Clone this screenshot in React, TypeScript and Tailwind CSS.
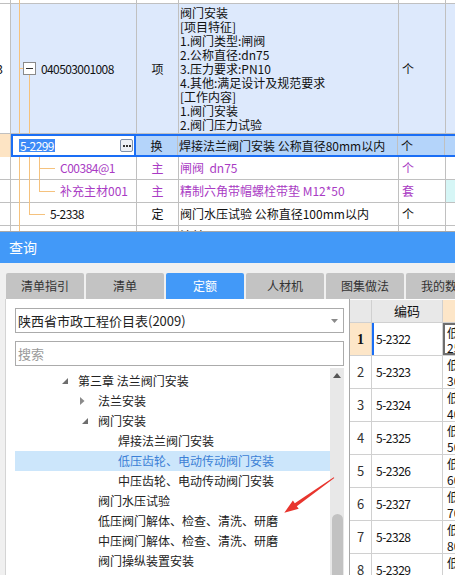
import React from 'react';

// top grid: items of the bill
const nameLines = [
  '阀门安装',
  '[项目特征]',
  '1.阀门类型:闸阀',
  '2.公称直径:dn75',
  '3.压力要求:PN10',
  '4.其他:满足设计及规范要求',
  '[工作内容]',
  '1.阀门安装',
  '2.阀门压力试验',
];

const tabs = ['清单指引', '清单', '定额', '人材机', '图集做法', '我的数据'];

interface TreeItem {
  text: string;
  level: 0 | 1 | 2;
  icon?: 'open' | 'closed';
  selected?: boolean;
}

const treeItems: TreeItem[] = [
  { text: '第三章 法兰阀门安装', level: 0, icon: 'open' },
  { text: '法兰安装', level: 1, icon: 'closed' },
  { text: '阀门安装', level: 1, icon: 'open' },
  { text: '焊接法兰阀门安装', level: 2 },
  { text: '低压齿轮、电动传动阀门安装', level: 2, selected: true },
  { text: '中压齿轮、电动传动阀门安装', level: 2 },
  { text: '阀门水压试验', level: 1 },
  { text: '低压阀门解体、检查、清洗、研磨', level: 1 },
  { text: '中压阀门解体、检查、清洗、研磨', level: 1 },
  { text: '阀门操纵装置安装', level: 1 },
];

const levelPad = ['pl-[47px]', 'pl-[67px]', 'pl-[87px]'];

const quotaRows = [
  ['1', '5-2322', '25'],
  ['2', '5-2323', '30'],
  ['3', '5-2324', '40'],
  ['4', '5-2325', '50'],
  ['5', '5-2326', '60'],
  ['6', '5-2327', '70'],
  ['7', '5-2328', '80'],
  ['8', '5-2329', '90'],
];

const TreeIcon: React.FC<{ icon?: 'open' | 'closed' }> = ({ icon }) => {
  if (icon === 'open') {
    return (
      <svg width="6" height="6" viewBox="0 0 6 6" className="mt-[-1px]">
        <path d="M6 0 L6 6 L0 6 Z" fill="#6e6e6e" />
      </svg>
    );
  }
  if (icon === 'closed') {
    return (
      <svg width="5" height="8" viewBox="0 0 5 8" className="ml-[-2px]">
        <path d="M0 0 L4.5 4 L0 8 Z" fill="#8a8a8a" />
      </svg>
    );
  }
  return null;
};

export default function App() {
  return (
    <div className="relative w-[455px] h-[575px] overflow-hidden bg-white font-['Noto_Sans_CJK_SC',sans-serif]">
      {/* Bill grid */}
      <div className="h-[232px] overflow-hidden text-[12px] leading-[14px] text-[#111]">
        {/* partial row above */}
        <div className="flex h-[4px] border-b border-[#c0c0c0]">
          <div className="w-[11px] border-r border-[#c0c0c0]" />
          <div className="relative w-[126px] border-r border-[#c0c0c0]">
            <span className="absolute left-[8px] top-0 bottom-0 w-px bg-[#f5c27e]" />
          </div>
          <div className="w-[42px] border-r border-[#c0c0c0]" />
          <div className="w-[220px] border-r border-[#c0c0c0]" />
          <div className="w-[47px] border-r border-[#c0c0c0]" />
          <div className="flex-1" />
        </div>

        {/* list item row */}
        <div className="flex h-[130px] border-b border-[#c0c0c0]">
          <div className="w-[11px] border-r border-[#c0c0c0] overflow-hidden flex items-center justify-end pr-[7px]">
            <span>3</span>
          </div>
          <div className="relative w-[126px] border-r border-[#c0c0c0] bg-[#dde9fc] flex items-center">
            <span className="absolute left-[8px] top-[-1px] bottom-[-1px] w-px bg-[#f5c27e]" />
            <span className="absolute left-[8px] top-[64px] w-[4px] h-px bg-[#f5c27e]" />
            <span className="absolute left-[18px] top-[71px] bottom-[-1px] w-px bg-[#f5c27e]" />
            <span className="absolute left-[12px] top-[58px] w-[13px] h-[13px] border border-[#8a8a8a] bg-white flex items-center justify-center">
              <span className="w-[7px] h-px bg-[#333]" />
            </span>
            <span className="pl-[30px] tracking-[-0.6px]">040503001008</span>
          </div>
          <div className="w-[42px] border-r border-[#c0c0c0] bg-[#dde9fc] flex items-center justify-center">项</div>
          <div className="w-[220px] border-r border-[#c0c0c0] bg-[#dde9fc] pt-[2px] pl-[1px]">
            {nameLines.map((l) => (
              <div key={l} className="whitespace-nowrap">{l}</div>
            ))}
          </div>
          <div className="w-[47px] border-r border-[#c0c0c0] bg-[#dde9fc] flex items-center pl-[3px]">个</div>
          <div className="flex-1 bg-[#dde9fc]" />
        </div>

        {/* selected quota row */}
        <div className="flex h-[23px]">
          <div className="w-[11px] border-r border-[#c0c0c0] bg-[#fde4c4]" />
          <div className="flex flex-1 border-y-2 border-[#1a6ef5] bg-[#b4d4fa]">
            <div className="w-[125px] border-x-2 border-[#1a6ef5] bg-white flex items-center justify-between pl-[6px] pr-[1px]">
              <span className="bg-[#3d8af7] text-white px-px leading-[13px] tracking-[-0.6px]">5-2299</span>
              <span className="w-[13px] h-[13px] rounded-[2px] border border-[#8090a8] bg-[#eef1f6] flex items-center justify-center gap-[1px]">
                <span className="w-[2px] h-[2px] bg-[#333]" />
                <span className="w-[2px] h-[2px] bg-[#333]" />
                <span className="w-[2px] h-[2px] bg-[#333]" />
              </span>
            </div>
            <div className="w-[42px] border-r border-[#c0c0c0] flex items-center justify-center">换</div>
            <div className="w-[220px] border-r border-[#c0c0c0] flex items-center pl-[1px] whitespace-nowrap">焊接法兰阀门安装 公称直径80mm以内</div>
            <div className="w-[47px] border-r border-[#c0c0c0] flex items-center pl-[3px]">个</div>
            <div className="flex-1" />
          </div>
        </div>

        {/* main material rows */}
        <div className="flex h-[23px] border-b border-[#c0c0c0] text-[#a93bc4]">
          <div className="w-[11px] border-r border-[#c0c0c0]" />
          <div className="relative w-[126px] border-r border-[#c0c0c0] flex items-center">
            <span className="absolute left-[8px] top-0 bottom-[-1px] w-px bg-[#f5c27e]" />
            <span className="absolute left-[18px] top-0 bottom-[-1px] w-px bg-[#f5c27e]" />
            <span className="absolute left-[28px] top-0 bottom-[-1px] w-px bg-[#f5c27e]" />
            <span className="absolute left-[28px] top-[11px] w-[16px] h-px bg-[#f5c27e]" />
            <span className="pl-[49px] tracking-[-0.5px]">C00384@1</span>
          </div>
          <div className="w-[42px] border-r border-[#c0c0c0] flex items-center justify-center">主</div>
          <div className="w-[220px] border-r border-[#c0c0c0] flex items-center pl-[1px] whitespace-pre">闸阀  dn75</div>
          <div className="w-[47px] border-r border-[#c0c0c0] flex items-center pl-[3px]">个</div>
          <div className="flex-1" />
        </div>

        <div className="flex h-[23px] border-b border-[#c0c0c0] text-[#a93bc4]">
          <div className="w-[11px] border-r border-[#c0c0c0]" />
          <div className="relative w-[126px] border-r border-[#c0c0c0] flex items-center">
            <span className="absolute left-[8px] top-0 bottom-[-1px] w-px bg-[#f5c27e]" />
            <span className="absolute left-[18px] top-0 bottom-[-1px] w-px bg-[#f5c27e]" />
            <span className="absolute left-[28px] top-0 h-[11px] w-px bg-[#f5c27e]" />
            <span className="absolute left-[28px] top-[11px] w-[16px] h-px bg-[#f5c27e]" />
            <span className="pl-[49px]">补充主材001</span>
          </div>
          <div className="w-[42px] border-r border-[#c0c0c0] flex items-center justify-center">主</div>
          <div className="w-[220px] border-r border-[#c0c0c0] flex items-center pl-[1px] whitespace-nowrap">精制六角带帽螺栓带垫 M12*50</div>
          <div className="w-[47px] border-r border-[#c0c0c0] flex items-center pl-[3px]">套</div>
          <div className="flex-1 bg-[#d6f6f6]" />
        </div>

        <div className="flex h-[23px] border-b border-[#c0c0c0]">
          <div className="w-[11px] border-r border-[#c0c0c0]" />
          <div className="relative w-[126px] border-r border-[#c0c0c0] flex items-center">
            <span className="absolute left-[8px] top-0 bottom-[-1px] w-px bg-[#f5c27e]" />
            <span className="absolute left-[18px] top-0 h-[11px] w-px bg-[#f5c27e]" />
            <span className="absolute left-[18px] top-[11px] w-[16px] h-px bg-[#f5c27e]" />
            <span className="pl-[39px] tracking-[-0.6px]">5-2338</span>
          </div>
          <div className="w-[42px] border-r border-[#c0c0c0] flex items-center justify-center">定</div>
          <div className="w-[220px] border-r border-[#c0c0c0] flex items-center pl-[1px] whitespace-nowrap">阀门水压试验 公称直径100mm以内</div>
          <div className="w-[47px] border-r border-[#c0c0c0] flex items-center pl-[3px]">个</div>
          <div className="flex-1" />
        </div>

        {/* partial row below */}
        <div className="flex h-[6px] border-b border-[#a8a8a8] overflow-hidden">
          <div className="w-[11px] border-r border-[#c0c0c0]" />
          <div className="relative w-[126px] border-r border-[#c0c0c0]">
            <span className="absolute left-[8px] top-0 bottom-0 w-px bg-[#f5c27e]" />
          </div>
          <div className="w-[42px] border-r border-[#c0c0c0]" />
          <div className="w-[220px] border-r border-[#c0c0c0] pl-[1px] pt-[3px] leading-[14px] whitespace-nowrap">法兰</div>
          <div className="w-[47px] border-r border-[#c0c0c0]" />
          <div className="flex-1" />
        </div>
      </div>

      {/* Query dialog title */}
      <div className="h-[31px] bg-[#4299f8] flex items-center pl-[9px] text-white text-[14px]">查询</div>

      {/* Query body */}
      <div className="h-[312px] bg-[#f0f0f0] pt-[10px] flex flex-col">
        <div className="flex gap-[2px] pl-[6px] h-[26px] shrink-0">
          {tabs.map((t) => (
            <div
              key={t}
              className={
                t === '定额'
                  ? 'w-[78px] shrink-0 rounded-t-[2px] bg-[#4299f8] text-white text-[12px] flex items-center justify-center'
                  : 'w-[78px] shrink-0 rounded-t-[2px] bg-[#c3c3c3] text-[#333] text-[12px] flex items-center justify-center whitespace-nowrap'
              }
            >
              {t}
            </div>
          ))}
        </div>

        <div className="flex flex-1 min-h-0">
          {/* left: quota library tree */}
          <div className="ml-[5px] w-[344px] border-l border-[#d4d4d4] bg-white flex flex-col pt-[9px] pl-[9px] pr-[5px]">
            <div className="h-[25px] border border-[#ababab] flex items-center justify-between pl-[2px] pr-[5px] text-[13px] text-[#222]">
              <span>陕西省市政工程价目表(2009)</span>
              <svg width="7" height="4" viewBox="0 0 7 4">
                <path d="M0 0 L7 0 L3.5 4 Z" fill="#8a8a8a" />
              </svg>
            </div>
            <div className="mt-[8px] h-[25px] border border-[#ababab] flex items-center pl-[2px] text-[13px] text-[#9a9a9a]">搜索</div>
            <div className="flex flex-1 min-h-0">
              <div className="flex-1 pt-[5px] text-[12px] text-[#222]">
                {treeItems.map((it) => (
                  <div
                    key={it.text}
                    className={`h-[20px] flex items-center ${levelPad[it.level]} ${it.selected ? 'bg-[#cce6fb] text-[#3b7fd6]' : ''}`}
                  >
                    <span className="w-[16px] shrink-0 flex items-center">
                      <TreeIcon icon={it.icon} />
                    </span>
                    <span className="whitespace-nowrap">{it.text}</span>
                  </div>
                ))}
              </div>
              {/* scrollbar */}
              <div className="w-[14px] mt-[2px] bg-[#e8e8e8] flex flex-col items-center">
                <svg width="8" height="5" viewBox="0 0 8 5" className="mt-[5px]">
                  <path d="M0 5 L4 0 L8 5 Z" fill="#555" />
                </svg>
                <div className="mt-[136px] w-[11px] flex-1 rounded-t-full bg-[#c2c2c2]" />
              </div>
            </div>
          </div>

          {/* right: quota list */}
          <div className="flex-1 border-l border-[#a8a8a8] bg-white pt-px overflow-hidden text-[12px] text-[#111]">
            <div className="flex h-[23px] border-b border-[#d0d0d0]">
              <div className="w-[22px] shrink-0 bg-[#e8e8e8] border-r border-[#d0d0d0]" />
              <div className="w-[71px] shrink-0 bg-[#e8e8e8] border-r border-[#d0d0d0] flex items-center justify-center text-[13px]">编码</div>
              <div className="flex-1 bg-[#fde6c8]" />
            </div>
            {quotaRows.map(([n, code, size]) => (
              <div key={n} className="flex h-[33px] border-b border-[#d0d0d0]">
                <div
                  className={
                    n === '1'
                      ? "w-[22px] shrink-0 border-r border-[#d0d0d0] bg-[#fde6c8] flex items-center justify-center font-bold text-[14px] font-['Liberation_Serif',serif]"
                      : 'w-[22px] shrink-0 border-r border-[#d0d0d0] flex items-center justify-center text-[13px] text-[#333]'
                  }
                >
                  {n}
                </div>
                <div
                  className={
                    n === '1'
                      ? 'w-[71px] shrink-0 border-l-2 border-l-[#1a6ef5] border-r border-[#d0d0d0] flex items-center pl-[2px] tracking-[-0.5px]'
                      : 'w-[71px] shrink-0 border-r border-[#d0d0d0] flex items-center pl-[4px] tracking-[-0.5px]'
                  }
                >
                  {code}
                </div>
                <div
                  className={
                    n === '1'
                      ? 'flex-1 border-2 border-[#6e6e6e] pl-[2px] leading-[15px] whitespace-nowrap'
                      : 'flex-1 pl-[4px] pt-px leading-[16px] whitespace-nowrap'
                  }
                >
                  <div>低压</div>
                  <div>{size}</div>
                </div>
              </div>
            ))}
          </div>
        </div>
      </div>

      {/* red annotation arrow */}
      <svg
        className="absolute left-[280px] top-[474px] pointer-events-none"
        width="58"
        height="42"
        viewBox="0 0 58 42"
      >
        <polygon
          points="4.3,38.7 18.7,34.8 16.8,32.2 54.3,4.1 53.7,3.3 14.8,29.2 12.9,26.6"
          fill="#e8352e"
        />
      </svg>
    </div>
  );
}
